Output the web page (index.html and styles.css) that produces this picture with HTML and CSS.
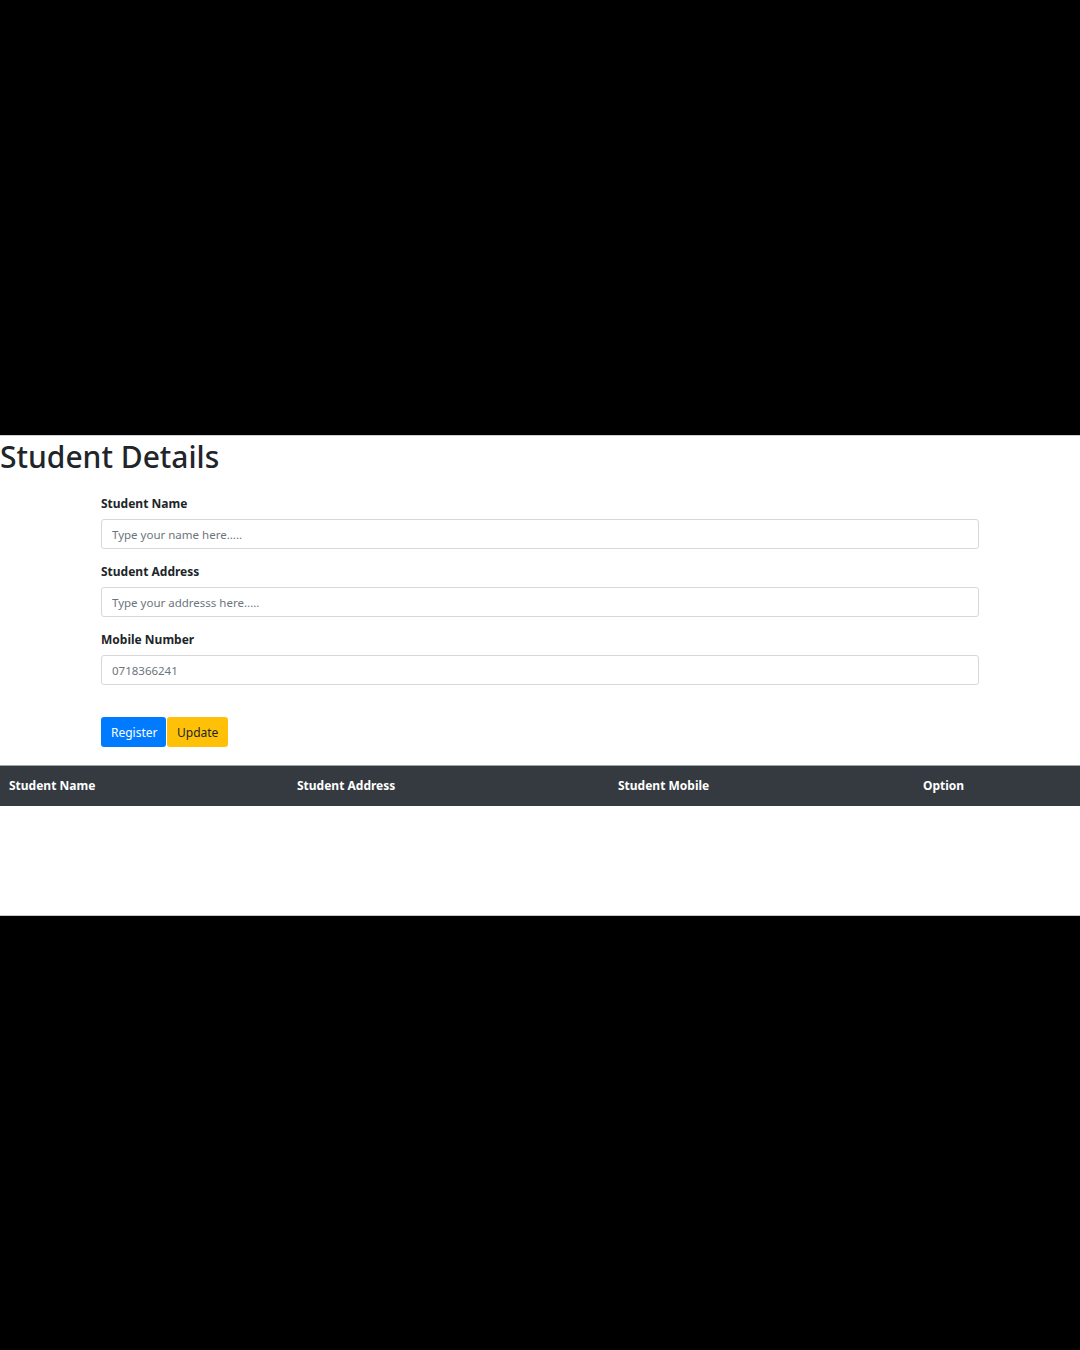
FILE: index.html
```html
<!DOCTYPE html>
<html>
<head>
<meta charset="utf-8">
<link rel="stylesheet" href="styles.css">
</head>
<body>
<div class="top-band"></div>
<main class="page">
  <h1 class="title">Student Details</h1>
  <form class="form">
    <div class="field">
      <label class="label">Student Name</label>
      <input class="input" type="text" placeholder="Type your name here.....">
    </div>
    <div class="field">
      <label class="label">Student Address</label>
      <input class="input" type="text" placeholder="Type your addresss here.....">
    </div>
    <div class="field">
      <label class="label">Mobile Number</label>
      <input class="input" type="text" placeholder="0718366241">
    </div>
    <div class="actions">
      <button type="button" class="btn btn-primary">Register</button>
      <button type="button" class="btn btn-warning">Update</button>
    </div>
  </form>
  <table class="table">
    <thead>
      <tr>
        <th class="c1">Student Name</th>
        <th class="c2">Student Address</th>
        <th class="c3">Student Mobile</th>
        <th class="c4">Option</th>
      </tr>
    </thead>
    <tbody></tbody>
  </table>
</main>
</body>
</html>
```
FILE: styles.css
```css
* { box-sizing: border-box; }
html, body { margin: 0; padding: 0; background: #000; }
body { font-family: "Noto Sans", "Open Sans", sans-serif; color: #212529; }
.top-band { height: 435px; background: #000; }
.page {
  background: #fff;
  height: 481px;
  border-top: 1px solid #d0d0d0;
  border-bottom: 1px solid #c8c8c8;
}
.title {
  margin: 0;
  padding: 2px 0 0 0;
  font-size: 30px;
  font-weight: 500;
  line-height: 38px;
  color: #212529;
}
.form {
  margin: 18px 101px 0 101px;
}
.field { margin-bottom: 13px; }
.label {
  display: block;
  font-size: 12px;
  font-weight: 700;
  line-height: 20px;
  margin-bottom: 5px;
}
.input {
  display: block;
  width: 100%;
  height: 30px;
  border: 1px solid #d6d8da;
  border-radius: 3px;
  padding: 0 10px;
  font-family: inherit;
  font-size: 11.5px;
  color: #495057;
  outline: none;
}
.input::placeholder { color: #6c757d; }
.actions {
  display: flex;
  gap: 1px;
  margin-top: 32px;
}
.btn {
  height: 30px;
  border: none;
  border-radius: 3px;
  font-family: inherit;
  font-size: 12px;
  padding: 0 10px;
  cursor: pointer;
}
.btn-primary { background: #007bff; color: #fff; width: 65px; }
.btn-warning { background: #ffc107; color: #212529; width: 61px; }
.table {
  margin-top: 18px;
  width: 100%;
  border-collapse: collapse;
  table-layout: fixed;
}
.table th {
  background: #343a40;
  color: #fff;
  text-align: left;
  font-size: 12px;
  font-weight: 700;
  height: 40px;
  padding: 0 9px;
  border-top: 1px solid #9ea2a6;
}
.c1 { width: 288px; }
.c2 { width: 321px; }
.c3 { width: 305px; }
.c4 { width: 166px; }
```
